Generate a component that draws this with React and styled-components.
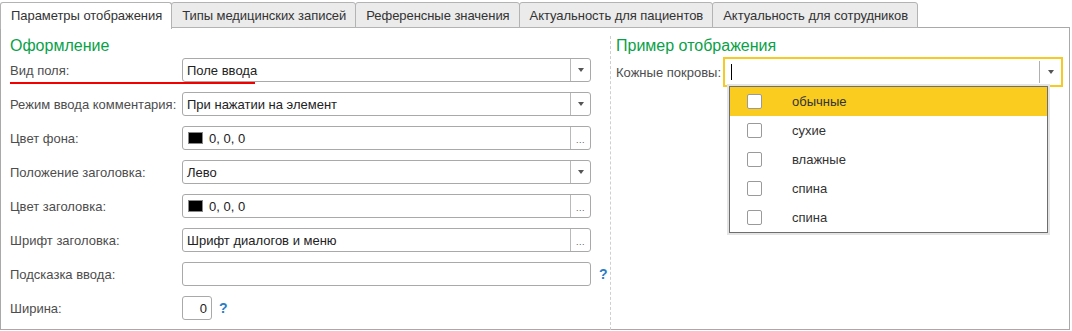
import React from "react";
import styled, { createGlobalStyle } from "styled-components";

const GlobalStyle = createGlobalStyle`
  body {
    margin: 0;
    background: #fff;
    font-family: "Liberation Sans", Arial, sans-serif;
    font-size: 13px;
    color: #333;
  }
`;

const Page = styled.div`
  width: 1072px;
  height: 331px;
  overflow: hidden;
`;

const TabBar = styled.div`
  display: flex;
  align-items: flex-end;
  height: 28px;
`;

const Tab = styled.div`
  position: relative;
  z-index: ${(p) => (p.$active ? 2 : 1)};
  height: ${(p) => (p.$active ? "27px" : "26px")};
  line-height: 26px;
  padding: 0 9px 0 10px;
  margin-right: -1px;
  margin-bottom: ${(p) => (p.$active ? "-1px" : "0")};
  border: 1px solid #b3b3b3;
  border-bottom: ${(p) => (p.$active ? "none" : "1px solid #b3b3b3")};
  border-radius: 3px 3px 0 0;
  background: ${(p) => (p.$active ? "#fff" : "#ebebeb")};
  color: #333;
  letter-spacing: -0.05px;
  white-space: nowrap;
  box-sizing: border-box;
`;

const Panel = styled.div`
  width: 1070px;
  height: 303px;
  margin-top: -1px;
  border: 1px solid #a9a9a9;
  box-sizing: border-box;
  display: grid;
  grid-template-columns: 609px 1fr;
  padding: 8px 0 7px 0;
`;

const LeftColumn = styled.div`
  padding-left: 9px;
`;

const RightColumn = styled.div`
  border-left: 1px dashed #cfcfcf;
  padding-left: 5px;
  padding-right: 5px;
`;

const Heading = styled.div`
  font-size: 16px;
  line-height: 20px;
  height: 20px;
  color: #09a148;
  margin-bottom: 2px;
`;

const Row = styled.div`
  position: relative;
  display: flex;
  align-items: center;
  height: 24px;
  margin-bottom: 10px;
`;

const Label = styled.div`
  width: ${(p) => p.$width || 172}px;
  flex: none;
  color: #4d4d4d;
  white-space: nowrap;
`;

const Field = styled.div`
  display: flex;
  align-items: center;
  width: ${(p) => p.$width || 409}px;
  height: 24px;
  box-sizing: border-box;
  border: 1px solid #a9a9a9;
  border-radius: 3px;
  background: #fff;
  color: #222;
`;

const FieldText = styled.div`
  flex: 1;
  padding: 0 4px;
  white-space: nowrap;
  text-align: ${(p) => (p.$right ? "right" : "left")};
`;

const FieldButton = styled.div`
  width: 19px;
  height: 22px;
  flex: none;
  border-left: 1px solid #b9b9b9;
  display: flex;
  align-items: center;
  justify-content: center;
  color: #555;
  font-size: 10px;
`;

const Arrow = styled.span`
  width: 0;
  height: 0;
  border-left: 3px solid transparent;
  border-right: 3px solid transparent;
  border-top: 4px solid #555;
`;

const Dots = styled.span`
  font-size: 9px;
  line-height: 9px;
  margin-top: 5px;
  letter-spacing: 0.5px;
`;

const Swatch = styled.span`
  display: inline-block;
  width: 13px;
  height: 10px;
  border: 1px solid #888;
  background: #000;
  margin: 0 6px 0 1px;
  vertical-align: -1px;
`;

const Help = styled.span`
  color: #2a7dc4;
  font-size: 14px;
  font-weight: bold;
  margin-left: ${(p) => p.$gap || 8}px;
`;

const Annotation = styled.div`
  position: absolute;
  left: 0;
  top: 24px;
  width: 245px;
  height: 2px;
  background: #f20000;
`;

const SampleRow = styled.div`
  display: flex;
  align-items: center;
  height: 30px;
  margin-top: -1px;
`;

const SampleInput = styled.div`
  position: relative;
  display: flex;
  align-items: center;
  width: 340px;
  height: 30px;
  box-sizing: border-box;
  border: 2px solid #f7c923;
  background: #fff;
`;

const Caret = styled.div`
  width: 1px;
  height: 16px;
  background: #000;
  margin-left: 6px;
  flex: none;
`;

const Spacer = styled.div`
  flex: 1;
`;

const SampleButton = styled.div`
  width: 21px;
  height: 22px;
  border-left: 1px solid #b0b0b0;
  display: flex;
  align-items: center;
  justify-content: center;
`;

const Popup = styled.div`
  position: absolute;
  left: 4px;
  top: 27px;
  width: 319px;
  box-sizing: border-box;
  border: 1px solid #6e6e6e;
  background: #fff;
  box-shadow: 0 0 0 2px #e4e4e4;
  z-index: 5;
`;

const Option = styled.div`
  display: flex;
  align-items: center;
  height: 29px;
  padding-left: 17px;
  background: ${(p) => (p.$selected ? "#f9cc1f" : "#fff")};
  color: #333;
`;

const Check = styled.div`
  width: 15px;
  height: 15px;
  box-sizing: border-box;
  border: 1px solid #9a9a9a;
  border-radius: 2px;
  background: #fff;
  margin-right: 30px;
`;

const fields = [
  { label: "Режим ввода комментария:", value: "При нажатии на элемент", kind: "select" },
  { label: "Цвет фона:", value: "0, 0, 0", kind: "color" },
  { label: "Положение заголовка:", value: "Лево", kind: "select" },
  { label: "Цвет заголовка:", value: "0, 0, 0", kind: "color" },
  { label: "Шрифт заголовка:", value: "Шрифт диалогов и меню", kind: "dots" },
];

const options = ["обычные", "сухие", "влажные", "спина", "спина"];

const tabs = [
  "Параметры отображения",
  "Типы медицинских записей",
  "Референсные значения",
  "Актуальность для пациентов",
  "Актуальность для сотрудников",
];

const FormField = ({ value, kind }) => (
  <Field>
    <FieldText>
      {kind === "color" && <Swatch />}
      {value}
    </FieldText>
    <FieldButton>{kind === "select" ? <Arrow /> : <Dots>...</Dots>}</FieldButton>
  </Field>
);

export default function App() {
  return (
    <Page>
      <GlobalStyle />
      <TabBar>
        {tabs.map((t, i) => (
          <Tab key={t} $active={i === 0}>
            {t}
          </Tab>
        ))}
      </TabBar>
      <Panel>
        <LeftColumn>
          <Heading>Оформление</Heading>
          <Row>
            <Label>Вид поля:</Label>
            <FormField value="Поле ввода" kind="select" />
            <Annotation />
          </Row>
          {fields.map((f) => (
            <Row key={f.label}>
              <Label>{f.label}</Label>
              <FormField value={f.value} kind={f.kind} />
            </Row>
          ))}
          <Row>
            <Label>Подсказка ввода:</Label>
            <Field />
            <Help>?</Help>
          </Row>
          <Row>
            <Label>Ширина:</Label>
            <Field $width={30}>
              <FieldText $right>0</FieldText>
            </Field>
            <Help $gap={7}>?</Help>
          </Row>
        </LeftColumn>
        <RightColumn>
          <Heading>Пример отображения</Heading>
          <SampleRow>
            <Label $width={107}>Кожные покровы:</Label>
            <SampleInput>
              <Caret />
              <Spacer />
              <SampleButton>
                <Arrow />
              </SampleButton>
              <Popup>
                {options.map((o, i) => (
                  <Option key={i} $selected={i === 0}>
                    <Check />
                    {o}
                  </Option>
                ))}
              </Popup>
            </SampleInput>
          </SampleRow>
        </RightColumn>
      </Panel>
    </Page>
  );
}
